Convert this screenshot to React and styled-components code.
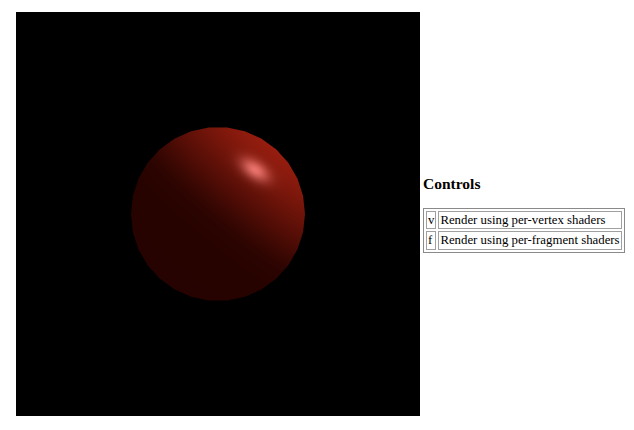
import React, { useEffect, useRef } from 'react';
import styled, { createGlobalStyle } from 'styled-components';

const GlobalStyle = createGlobalStyle`
    html, body {
        margin: 0;
        background: #fff;
    }
`;

const Page = styled.div`
    display: flex;
    align-items: center;
    gap: 3px;
    width: 634px;
    height: 430px;
    box-sizing: border-box;
    padding: 12px 0 14px 16px;
    font-family: "Liberation Serif", "Times New Roman", serif;
    color: #000;
`;

const Viewport = styled.canvas`
    display: block;
    flex: none;
    width: 404px;
    height: 404px;
`;

const Controls = styled.div`
    display: flex;
    flex-direction: column;
    gap: 15px;
    margin-top: -1px;
`;

const Heading = styled.h3`
    margin: 0;
    font-size: 15.5px;
    line-height: 18px;
    font-weight: bold;
`;

const KeyTable = styled.table`
    border-collapse: separate;
    border-spacing: 2px;
    border: 1px solid #8a8a8a;
    font-size: 12.8px;
    line-height: 14.5px;
`;

const Cell = styled.td`
    border: 1px solid #a0a0a0;
    padding: 1px;
    white-space: nowrap;
`;

const SIZE = 404;
const CENTER_X = 202;
const CENTER_Y = 202;
const RADIUS = 87;
const FACETS = 30;
const LIGHT = [0.636, -0.762, 0.095];
const SPOT = { x: 37, y: -44, along: [0.82, 0.57], across: [0.57, -0.82], long: 16, short: 9 };

function shade(dx, dy, nx, ny, nz) {
    const lambert = nx * LIGHT[0] + ny * LIGHT[1] + nz * LIGHT[2];
    // soft clamp, the terminator is blurry in the render
    const diffuse = 0.5 * (lambert + Math.sqrt(lambert * lambert + 0.012));
    // highlight is stretched along the rim, plain phong stays too round
    const sx = dx - SPOT.x;
    const sy = dy - SPOT.y;
    const u = (sx * SPOT.along[0] + sy * SPOT.along[1]) / SPOT.long;
    const v = (sx * SPOT.across[0] + sy * SPOT.across[1]) / SPOT.short;
    const spec = Math.exp(-(u * u + v * v));
    return [
        38 + 112 * diffuse + 112 * spec,
        3 + 26 * diffuse + 92 * spec,
        0 + 15 * diffuse + 96 * spec,
    ];
}

// per-fragment lighting, the model itself is a low poly sphere so the outline gets facets
function drawSphere(ctx) {
    const image = ctx.createImageData(SIZE, SIZE);
    const step = (Math.PI * 2) / FACETS;
    for (let y = 0; y < SIZE; y++) {
        for (let x = 0; x < SIZE; x++) {
            const dx = x + 0.5 - CENTER_X;
            const dy = y + 0.5 - CENTER_Y;
            const dist = Math.hypot(dx, dy);
            const angle = Math.atan2(dy, dx);
            const folded = ((angle % step) + step) % step - step / 2;
            const edge = RADIUS * Math.cos(step / 2) / Math.cos(folded);
            const coverage = Math.min(Math.max(edge - dist + 0.5, 0), 1);
            const i = (y * SIZE + x) * 4;
            image.data[i + 3] = 255;
            if (coverage === 0) continue;
            const nx = dx / RADIUS;
            const ny = dy / RADIUS;
            const nz = Math.sqrt(Math.max(1 - nx * nx - ny * ny, 0));
            const [r, g, b] = shade(dx, dy, nx, ny, nz);
            image.data[i] = r * coverage;
            image.data[i + 1] = g * coverage;
            image.data[i + 2] = b * coverage;
        }
    }
    ctx.putImageData(image, 0, 0);
}

const keys = [
    { key: 'v', label: 'Render using per-vertex shaders' },
    { key: 'f', label: 'Render using per-fragment shaders' },
];

const App = () => {
    const canvasRef = useRef(null);

    useEffect(() => {
        drawSphere(canvasRef.current.getContext('2d'));
    }, []);

    return (
        <Page>
            <GlobalStyle />
            <Viewport ref={canvasRef} width={SIZE} height={SIZE} />
            <Controls>
                <Heading>Controls</Heading>
                <KeyTable>
                    <tbody>
                        {keys.map(row => (
                            <tr key={row.key}>
                                <Cell>{row.key}</Cell>
                                <Cell>{row.label}</Cell>
                            </tr>
                        ))}
                    </tbody>
                </KeyTable>
            </Controls>
        </Page>
    );
};

export default App;
